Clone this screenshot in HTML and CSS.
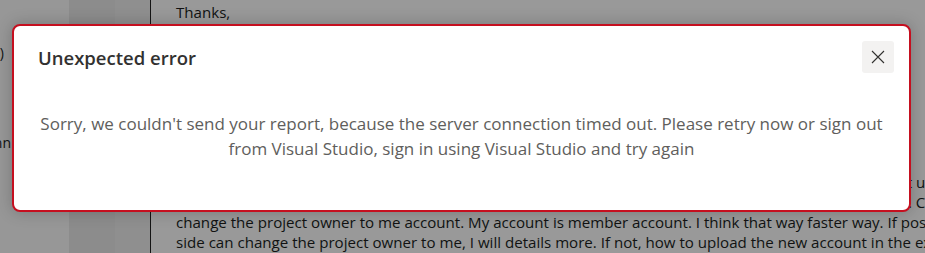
FILE: index.html
```html
<!DOCTYPE html>
<html>
<head>
  <link rel="stylesheet" href="styles.css">
</head>
<body>
  <div class="page">
    <div class="nav">
      <div class="nav-item nav-count">Comments (2)</div>
      <div class="nav-item nav-link">Assigned to Ann</div>
    </div>
    <div class="rail"></div>
    <div class="rail rail-light"></div>
    <div class="thread">
      <div class="line">Thanks,</div>
      <div class="message">
        <div class="line">Could you please help me to transfer the project owner to my new account, because the old one I cannot update</div>
        <div class="line">because the old account was deleted and I cannot sign in with it anymore. Please help me with this issue. Can you</div>
        <div class="line">change the project owner to me account. My account is member account. I think that way faster way. If possible your</div>
        <div class="line">side can change the project owner to me, I will details more. If not, how to upload the new account in the existing</div>
      </div>
    </div>
  </div>

  <div class="overlay">
    <div class="dialog">
      <div class="dialog-header">
        <h2 class="dialog-title">Unexpected error</h2>
        <button class="close-btn" aria-label="Close">
          <svg width="14" height="14" viewBox="0 0 14 14">
            <path d="M1 1 L13 13 M13 1 L1 13" stroke="#323130" stroke-width="1.1" fill="none"/>
          </svg>
        </button>
      </div>
      <p class="dialog-body">Sorry, we couldn't send your report, because the server connection timed out. Please retry now or sign out from Visual Studio, sign in using Visual Studio and try again</p>
    </div>
  </div>
</body>
</html>
```

FILE: styles.css
```css
* {
  margin: 0;
  padding: 0;
  box-sizing: border-box;
}

body {
  width: 925px;
  height: 253px;
  overflow: hidden;
  position: relative;
  font-family: "Open Sans", "Noto Sans", sans-serif;
  background: #fcfcfc;
}

.page {
  display: grid;
  grid-template-columns: 69px 46px 35px 1fr;
  height: 253px;
}

.nav {
  background: #fcfcfc;
  overflow: hidden;
  padding-top: 43px;
  font-size: 14px;
  color: #201f1e;
}

.nav-item {
  white-space: nowrap;
  direction: rtl;
  width: 4px;
}

.nav-link {
  margin-top: 71px;
  width: 11px;
}

.rail {
  background: #e9e9e9;
}

.rail-light {
  background: #eeeeee;
}

.thread {
  background: #ffffff;
  border-left: 1px solid #222;
  padding-left: 25px;
  overflow: hidden;
  font-size: 15.1px;
  color: #201f1e;
}

.line {
  white-space: nowrap;
  line-height: 20px;
  height: 20px;
}

.thread > .line {
  margin-top: 2px;
}

.message {
  margin-top: 150px;
}

.overlay {
  position: absolute;
  inset: 0;
  background: rgba(0, 0, 0, 0.4);
  padding: 24px 14px 41px 12px;
}

.dialog {
  height: 188px;
  background: #ffffff;
  border: 2px solid #c50f1f;
  border-radius: 8px;
  box-shadow: 0 0 16px rgba(0, 0, 0, 0.22);
  padding: 15px 15px 0 24px;
}

.dialog-header {
  display: flex;
  justify-content: space-between;
  align-items: center;
}

.dialog-title {
  font-size: 18.5px;
  font-weight: 600;
  color: #323130;
  padding-top: 1px;
}

.close-btn {
  width: 32px;
  height: 32px;
  border: none;
  border-radius: 3px;
  background: #f3f2f1;
  display: flex;
  align-items: center;
  justify-content: center;
}

.dialog-body {
  margin-top: 38px;
  padding: 0 9px 0 0;
  text-align: center;
  font-size: 17px;
  line-height: 25px;
  color: #605e5c;
}
```
